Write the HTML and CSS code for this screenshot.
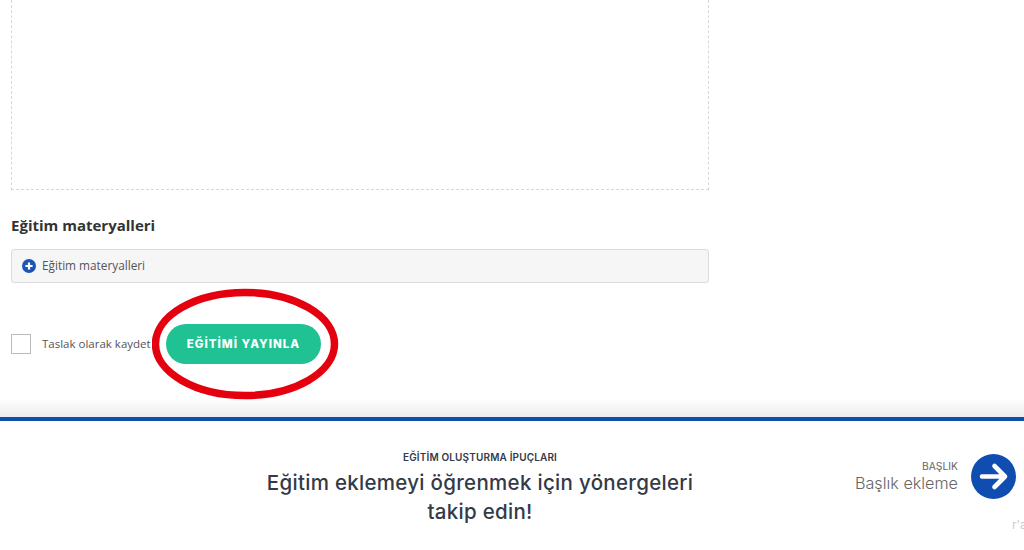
FILE: index.html
```html
<!DOCTYPE html>
<html lang="tr">
<head>
  <meta charset="UTF-8">
  <meta name="viewport" content="width=device-width, initial-scale=1.0">
  <title>Eğitim ekle</title>
  <link rel="stylesheet" href="styles.css">
</head>
<body>
  <div class="form-area">
    <div class="dropzone"></div>

    <h3 class="section-title">Eğitim materyalleri</h3>
    <div class="materials-bar">
      <svg class="plus-icon" viewBox="0 0 14 14" width="14" height="14">
        <circle cx="7" cy="7" r="7" fill="#1c55b8"/>
        <path d="M7 3.4v7.2M3.4 7h7.2" stroke="#fff" stroke-width="2.2"/>
      </svg>
      <span>Eğitim materyalleri</span>
    </div>

    <div class="publish-row">
      <span class="checkbox"></span>
      <span class="draft-label">Taslak olarak kaydet</span>
      <button class="publish-button">EĞİTİMİ YAYINLA</button>
      <svg class="red-circle" viewBox="0 0 188 112" width="188" height="112">
        <ellipse cx="93" cy="56" rx="89.5" ry="51.5" fill="none" stroke="#e4000f" stroke-width="7.5"/>
      </svg>
    </div>
  </div>

  <div class="tips-bar">
    <div class="tips-text">
      <div class="tips-label">EĞİTİM OLUŞTURMA İPUÇLARI</div>
      <div class="tips-title">Eğitim eklemeyi öğrenmek için yönergeleri takip edin!</div>
    </div>
    <div class="next-col">
      <div class="next-step">
        <div class="next-text">
          <div class="next-label">BAŞLIK</div>
          <div class="next-name">Başlık ekleme</div>
        </div>
        <svg class="next-icon" viewBox="0 0 45 45" width="45" height="45">
          <circle cx="22.5" cy="22.5" r="22.5" fill="#0f4db0"/>
          <path d="M11 22.5h21M23.5 12l10.5 10.5-10.5 10.5" fill="none" stroke="#fff" stroke-width="4.6" stroke-linecap="round" stroke-linejoin="round"/>
        </svg>
      </div>
      <div class="next-hint">r'a</div>
    </div>
  </div>
</body>
</html>
```

FILE: styles.css
```css
html, body {
  margin: 0;
  height: 550px;
  overflow: hidden;
  background-color: #fff;
}

body {
  display: flex;
  flex-direction: column;
  font-family: "Open Sans", sans-serif;
}

.form-area {
  height: 417px;
  box-sizing: border-box;
  padding-left: 11px;
  background: linear-gradient(to bottom, #fff 398px, #ececec 417px);
}

.dropzone {
  width: 698px;
  height: 190px;
  box-sizing: border-box;
  border: 1px dashed #d8d8d8;
  border-top: none;
}

.section-title {
  margin: 25px 0 13px;
  font-size: 15px;
  line-height: 21px;
  font-weight: 700;
  color: #333;
}

.materials-bar {
  display: flex;
  align-items: center;
  gap: 6px;
  width: 698px;
  height: 34px;
  box-sizing: border-box;
  padding: 0 0 1px 10px;
  background-color: #f6f6f6;
  border: 1px solid #dcdcdc;
  border-radius: 3px;
  font-size: 11.8px;
  line-height: 14px;
  color: #555;
}

.materials-bar span {
  margin-bottom: 2px;
}

.publish-row {
  position: relative;
  display: flex;
  align-items: center;
  margin-top: 41px;
  height: 40px;
}

.checkbox {
  width: 20px;
  height: 20px;
  box-sizing: border-box;
  border: 1px solid #bbb;
  background-color: #fff;
}

.draft-label {
  margin: 0 0 2px 11px;
  width: 124px;
  font-size: 11.5px;
  color: #555;
  white-space: nowrap;
}

.publish-button {
  width: 155px;
  height: 40px;
  padding: 0 0 1px;
  border: none;
  border-radius: 20px;
  background-color: #20c193;
  color: #fff;
  font-family: Inter, sans-serif;
  font-size: 11.5px;
  font-weight: 800;
  letter-spacing: 1px;
}

.red-circle {
  position: absolute;
  left: 141px;
  top: -36px;
}

.tips-bar {
  flex: 1;
  display: flex;
  border-top: 4px solid #0f4db0;
  background-color: #fff;
  overflow: hidden;
}

.tips-text {
  width: 480px;
  margin-left: 240px;
  padding-top: 30px;
  text-align: center;
  font-family: Inter, sans-serif;
  color: #333a48;
}

.tips-label {
  font-size: 10px;
  line-height: 13px;
  font-weight: 600;
  letter-spacing: 0.15px;
}

.tips-title {
  width: 440px;
  margin: 4px auto 0;
  font-size: 20.5px;
  line-height: 29px;
  font-weight: 500;
  letter-spacing: 0.3px;
}

.next-col {
  flex: 1;
  display: flex;
  flex-direction: column;
  align-items: flex-end;
  padding: 33px 8px 0 0;
}

.next-step {
  display: flex;
  align-items: center;
  gap: 13px;
}

.next-text {
  text-align: right;
  font-family: Inter, sans-serif;
  color: #666;
}

.next-label {
  font-size: 10.3px;
  line-height: 13px;
}

.next-name {
  font-size: 16.2px;
  line-height: 21px;
  font-weight: 300;
}

.next-hint {
  margin: 18px -8px 0 0;
  width: 12px;
  font-family: Inter, sans-serif;
  font-size: 12px;
  color: #ccc;
  white-space: nowrap;
}
```
